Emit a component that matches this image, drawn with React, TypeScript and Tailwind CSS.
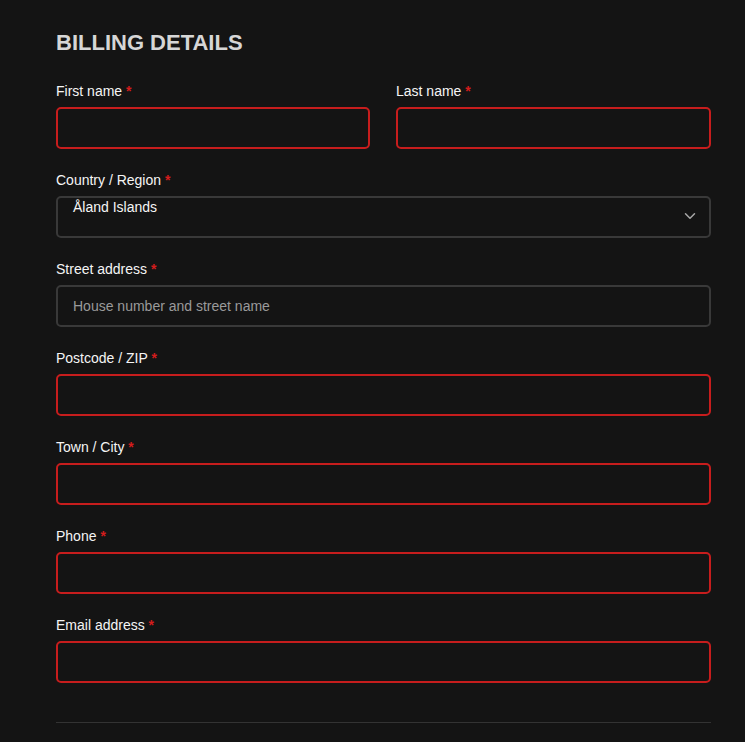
import { ChevronDown } from "lucide-react";

type Field = {
  label: string;
  error?: boolean;
  placeholder?: string;
};

const fields: Field[] = [
  { label: "Street address", placeholder: "House number and street name" },
  { label: "Postcode / ZIP", error: true },
  { label: "Town / City", error: true },
  { label: "Phone", error: true },
  { label: "Email address", error: true },
];

function Label({ text }: { text: string }) {
  return (
    <label className="block h-5 pt-px text-[14px] leading-5 text-[#f5f5f5]">
      {text} <span className="font-bold text-[#d31c1c]">*</span>
    </label>
  );
}

function Input({ error, placeholder }: { error?: boolean; placeholder?: string }) {
  return (
    <input
      type="text"
      placeholder={placeholder}
      className={
        "mt-[7px] block h-[42px] w-full rounded-[5px] border-2 bg-[#141414] px-[15px] text-[14px] text-[#f5f5f5] outline-none placeholder:text-[#9a9a9a] " +
        (error ? "border-[#c71d1d]" : "border-[#393939]")
      }
    />
  );
}

export default function App() {
  return (
    <div
      className="min-h-[742px] w-full bg-[#141414] px-[56px] pt-[30px]"
      style={{ fontFamily: '"Liberation Sans", Arial, sans-serif' }}
    >
      <div className="w-[655px]">
        <h3 className="text-[22px] font-bold leading-[26px] text-[#d6d6d6]">BILLING DETAILS</h3>

        <div className="mt-[24px] grid grid-cols-[314px_1fr] gap-x-[26px]">
          <div>
            <Label text="First name" />
            <Input error />
          </div>
          <div>
            <Label text="Last name" />
            <Input error />
          </div>
        </div>

        <div className="mt-[20px]">
          <Label text="Country / Region" />
          <div className="relative mt-[7px] h-[42px] w-full rounded-[5px] border-2 border-[#393939] bg-[#141414] px-[15px]">
            <span className="block pt-px text-[14px] leading-4 text-[#f5f5f5]">Åland Islands</span>
            <ChevronDown
              className="absolute right-[10px] top-[9px] text-[#a8a8a8]"
              size={18}
              strokeWidth={2}
            />
          </div>
        </div>

        {fields.map((f) => (
          <div key={f.label} className="mt-[20px]">
            <Label text={f.label} />
            <Input error={f.error} placeholder={f.placeholder} />
          </div>
        ))}

        <div className="mt-[39px] h-px w-full bg-[#333333]" />
      </div>
    </div>
  );
}
